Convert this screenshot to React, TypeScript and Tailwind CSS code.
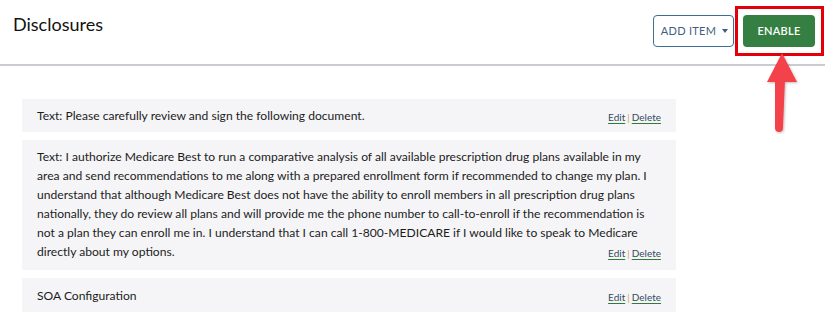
import React from 'react';

const items = [
  {
    id: 1,
    lines: ['Text: Please carefully review and sign the following document.'],
    pad: 'py-[7px]',
  },
  {
    id: 2,
    lines: [
      'Text: I authorize Medicare Best to run a comparative analysis of all available prescription drug plans available in my',
      'area and send recommendations to me along with a prepared enrollment form if recommended to change my plan. I',
      'understand that although Medicare Best does not have the ability to enroll members in all prescription drug plans',
      'nationally, they do review all plans and will provide me the phone number to call-to-enroll if the recommendation is',
      'not a plan they can enroll me in. I understand that I can call 1-800-MEDICARE if I would like to speak to Medicare',
      'directly about my options.',
    ],
    pad: 'pt-[7px] pb-[9px]',
  },
  {
    id: 3,
    lines: ['SOA Configuration'],
    pad: 'pt-[8px] pb-[7px]',
  },
];

function EditLinks() {
  return (
    <span className="shrink-0 mt-[3px] text-[10px] leading-[14px] text-[#34495e] whitespace-nowrap">
      <a className="underline decoration-[#2e7d32] underline-offset-2 cursor-pointer">Edit</a>
      <span className="text-[#e79a2e] mx-[2px]">|</span>
      <a className="underline decoration-[#2e7d32] underline-offset-2 cursor-pointer">Delete</a>
    </span>
  );
}

export default function App() {
  return (
    <div className="relative w-[825px] h-[321px] bg-white overflow-hidden font-['Lato',sans-serif] text-[#1c1c1c]">
      {/* Header */}
      <div className="h-[66px] border-b-2 border-[#c9ccd0] flex items-start justify-between pl-[13px] pr-[10px]">
        <h1 className="text-[18px] leading-[24px] mt-[12px] text-[#111]">Disclosures</h1>
        <div className="flex gap-[9px] mt-[15px]">
          <button className="h-[32px] w-[81px] border border-[#3b6f96] rounded-[4px] flex items-center justify-center gap-[6px] pl-[2px] text-[11px] text-[#3f5f7f] tracking-wide">
            ADD ITEM
            <span className="w-0 h-0 border-l-[3px] border-r-[3px] border-t-[4px] border-l-transparent border-r-transparent border-t-[#3f5f7f]" />
          </button>
          <button className="h-[32px] w-[72px] bg-[#367f42] rounded-[4px] text-white text-[11px] font-semibold tracking-wide">
            ENABLE
          </button>
        </div>
      </div>

      {/* Items */}
      <div className="pl-[22px] pt-[33px] flex flex-col gap-[8px] w-[676px]">
        {items.map((item) => (
          <div key={item.id} className={`bg-[#f5f5f7] px-[15px] ${item.pad} text-[12.1px] leading-[19px]`}>
            {item.lines.map((line, i) =>
              i === item.lines.length - 1 ? (
                <div key={i} className="flex items-center justify-between whitespace-nowrap">
                  <span>{line}</span>
                  <EditLinks />
                </div>
              ) : (
                <div key={i} className="whitespace-nowrap">
                  {line}
                </div>
              )
            )}
          </div>
        ))}
      </div>

      {/* Annotation */}
      <div className="absolute left-[735px] top-[6px] w-[89px] h-[50px] border-[3px] border-[#e3000b]" />
      <svg className="absolute left-[760px] top-[48px]" width="46" height="90" viewBox="0 0 46 90">
        <defs>
          <filter id="sh" x="-30%" y="-30%" width="160%" height="160%">
            <feDropShadow dx="1" dy="1" stdDeviation="1" floodColor="#000" floodOpacity="0.25" />
          </filter>
        </defs>
        <g filter="url(#sh)" fill="#f4424c">
          <polygon points="22,5 7,34 37,34" />
          <path d="M15 32 L25 32 L23 80 Q23 84 19 84 Q15 84 15 80 Z" />
        </g>
      </svg>
    </div>
  );
}
